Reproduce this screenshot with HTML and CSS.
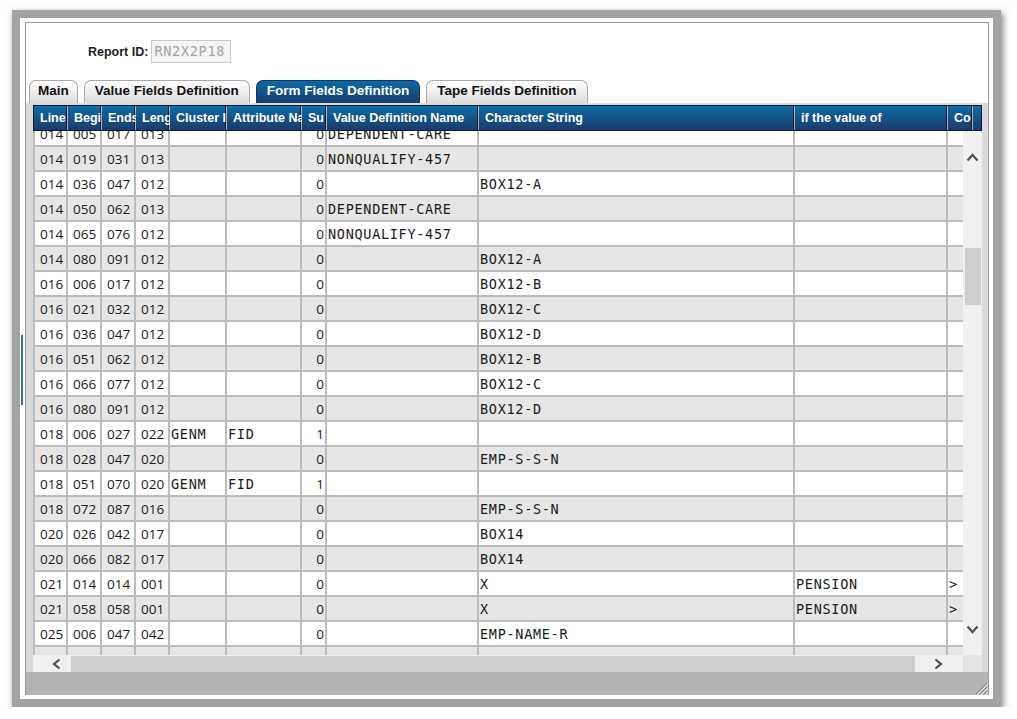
FILE: index.html
```html
<!DOCTYPE html>
<html lang="en">

<head>
    <meta charset="UTF-8">
    <title>Report Definition</title>
    <link rel="stylesheet" href="styles.css">
</head>

<body>
    <div class="frame">
        <span class="splitter"></span>
        <div class="panel">
            <div class="report-row">
                <span class="report-label">Report ID:</span>
                <div class="report-field">RN2X2P18</div>
            </div>

            <div class="tabs">
                <div class="tab">Main</div>
                <div class="tab">Value Fields Definition</div>
                <div class="tab active">Form Fields Definition</div>
                <div class="tab">Tape Fields Definition</div>
            </div>

            <div class="tab-body">
                <div class="grid">
                    <div class="grid-head">
                        <span>Line</span>
                        <span>Begi</span>
                        <span>Ends</span>
                        <span>Leng</span>
                        <span>Cluster I</span>
                        <span>Attribute Na</span>
                        <span>Su</span>
                        <span>Value Definition Name</span>
                        <span>Character String</span>
                        <span>if the value of</span>
                        <span>Co</span>
                        <span class="filler"></span>
                    </div>
                    <div class="grid-main">
                        <div class="rows">
                            <div class="rows-inner" id="rows"></div>
                        </div>
                        <div class="vscroll">
                            <div class="arrow">
                                <svg width="13" height="9" viewBox="0 0 13 9"><polyline points="1.5,7.5 6.5,2 11.5,7.5" fill="none" stroke="#4f4f4f" stroke-width="2.2"/></svg>
                            </div>
                            <div class="vthumb"></div>
                            <div class="spacer"></div>
                            <div class="arrow">
                                <svg width="13" height="9" viewBox="0 0 13 9"><polyline points="1.5,1.5 6.5,7 11.5,1.5" fill="none" stroke="#4f4f4f" stroke-width="2.2"/></svg>
                            </div>
                        </div>
                    </div>
                    <div class="hscroll">
                        <div class="htrack">
                            <div class="hleft">
                                <svg width="9" height="12" viewBox="0 0 9 12"><polyline points="7.5,1.5 2,6 7.5,10.5" fill="none" stroke="#4f4f4f" stroke-width="2.2"/></svg>
                            </div>
                            <div class="hthumb"></div>
                            <div class="hright">
                                <svg width="9" height="12" viewBox="0 0 9 12"><polyline points="1.5,1.5 7,6 1.5,10.5" fill="none" stroke="#4f4f4f" stroke-width="2.2"/></svg>
                            </div>
                        </div>
                    </div>
                </div>
            </div>

            <div class="status-bar">
                <svg class="grip" width="14" height="14" viewBox="0 0 14 14">
                    <g stroke="#808080" stroke-width="1">
                        <line x1="13" y1="2" x2="2" y2="13"/>
                        <line x1="13" y1="6" x2="6" y2="13"/>
                        <line x1="13" y1="10" x2="10" y2="13"/>
                    </g>
                    <g stroke="#ececec" stroke-width="1">
                        <line x1="14" y1="3" x2="3" y2="14"/>
                        <line x1="14" y1="7" x2="7" y2="14"/>
                        <line x1="14" y1="11" x2="11" y2="14"/>
                    </g>
                </svg>
            </div>
        </div>
    </div>

    <script>
        // line, begin, ends, length, cluster, attribute, sub, value def, char string, if value of, compare
        const data = [
            ["014", "005", "017", "013", "", "", "0", "DEPENDENT-CARE", "", "", ""],
            ["014", "019", "031", "013", "", "", "0", "NONQUALIFY-457", "", "", ""],
            ["014", "036", "047", "012", "", "", "0", "", "BOX12-A", "", ""],
            ["014", "050", "062", "013", "", "", "0", "DEPENDENT-CARE", "", "", ""],
            ["014", "065", "076", "012", "", "", "0", "NONQUALIFY-457", "", "", ""],
            ["014", "080", "091", "012", "", "", "0", "", "BOX12-A", "", ""],
            ["016", "006", "017", "012", "", "", "0", "", "BOX12-B", "", ""],
            ["016", "021", "032", "012", "", "", "0", "", "BOX12-C", "", ""],
            ["016", "036", "047", "012", "", "", "0", "", "BOX12-D", "", ""],
            ["016", "051", "062", "012", "", "", "0", "", "BOX12-B", "", ""],
            ["016", "066", "077", "012", "", "", "0", "", "BOX12-C", "", ""],
            ["016", "080", "091", "012", "", "", "0", "", "BOX12-D", "", ""],
            ["018", "006", "027", "022", "GENM", "FID", "1", "", "", "", ""],
            ["018", "028", "047", "020", "", "", "0", "", "EMP-S-S-N", "", ""],
            ["018", "051", "070", "020", "GENM", "FID", "1", "", "", "", ""],
            ["018", "072", "087", "016", "", "", "0", "", "EMP-S-S-N", "", ""],
            ["020", "026", "042", "017", "", "", "0", "", "BOX14", "", ""],
            ["020", "066", "082", "017", "", "", "0", "", "BOX14", "", ""],
            ["021", "014", "014", "001", "", "", "0", "", "X", "PENSION", ">"],
            ["021", "058", "058", "001", "", "", "0", "", "X", "PENSION", ">"],
            ["025", "006", "047", "042", "", "", "0", "", "EMP-NAME-R", "", ""],
            ["", "", "", "", "", "", "", "", "", "", ""]
        ];

        const rowsEl = document.getElementById("rows");

        data.forEach(function (values) {
            const row = document.createElement("div");
            row.className = "row";

            values.forEach(function (value, i) {
                const cell = document.createElement("div");
                if (i === 6) {
                    cell.className = "num-right";
                } else if (i >= 4) {
                    cell.className = "mono";
                }
                cell.textContent = value;
                row.appendChild(cell);
            });

            rowsEl.appendChild(row);
        });
    </script>
</body>

</html>
```

FILE: styles.css
```css
body {
    margin: 0;
    background: #fff;
    font-family: "Liberation Sans", Arial, sans-serif;
}

.frame {
    position: relative;
    width: 989px;
    height: 697px;
    box-sizing: border-box;
    margin: 10px 0 0 12px;
    padding: 4px 4px 4px 5px;
    border: 8px solid #a3a3a3;
    background: #fff;
    box-shadow: 2px 3px 7px rgba(0, 0, 0, 0.5);
}

.splitter {
    position: absolute;
    left: 1px;
    top: 317px;
    width: 2px;
    height: 70px;
    background: #2f6fae;
}

.panel {
    display: flex;
    flex-direction: column;
    height: 100%;
    box-sizing: border-box;
    border: 1px solid #9b9b9b;
    border-bottom: none;
}

/* report id */

.report-row {
    flex: none;
    height: 57px;
    display: flex;
    align-items: center;
    gap: 3px;
    padding-left: 62px;
}

.report-label {
    font-size: 12.5px;
    font-weight: bold;
    color: #222;
}

.report-field {
    width: 80px;
    height: 23px;
    box-sizing: border-box;
    padding-left: 2px;
    border: 1px solid #c9c9c9;
    background: #f5f5f5;
    color: #a3a3a3;
    font-family: "DejaVu Sans Mono", monospace;
    font-size: 13.5px;
    letter-spacing: 0.7px;
    line-height: 21px;
}

/* tabs */

.tabs {
    flex: none;
    height: 23px;
    display: flex;
    align-items: flex-end;
    gap: 6px;
    padding-left: 3px;
}

.tab {
    height: 23px;
    box-sizing: border-box;
    padding: 0 10px;
    border: 1px solid #a9a9a9;
    border-bottom: none;
    border-radius: 7px 7px 0 0;
    background: linear-gradient(#ffffff, #dcdcdc);
    color: #111;
    font-size: 13.5px;
    font-weight: bold;
    line-height: 20px;
    white-space: nowrap;
}

.tab:first-child {
    padding: 0 8px;
}

.tab.active {
    background: linear-gradient(#0a6aa6, #1a3c6c);
    border-color: #163459;
    color: #fff;
}

.tab-body {
    flex: 1;
    min-height: 0;
    padding: 2px 6px 0 7px;
    background: #dadada;
}

/* grid */

.grid {
    width: 949px;
    height: 567px;
    display: flex;
    flex-direction: column;
    background: #e4e4e4;
}

.grid-head {
    flex: none;
    height: 26px;
    box-sizing: border-box;
    display: grid;
    grid-template-columns: 34px 34px 34px 34px 57px 75px 25px 152px 316px 153px 25px 1fr;
    border: 1px solid #0f1a2b;
    background: linear-gradient(#0e6ba5, #1b3b6a);
}

.grid-head span {
    padding-left: 6px;
    overflow: hidden;
    white-space: nowrap;
    color: #fff;
    font-size: 12.5px;
    font-weight: bold;
    line-height: 24px;
    box-shadow: inset -1px 0 0 #a7b0bb, inset -2px 0 0 #0b1a30;
}

.grid-head .filler {
    box-shadow: none;
}

.grid-main {
    flex: 1;
    min-height: 0;
    display: flex;
}

.rows {
    width: 930px;
    overflow: hidden;
}

.rows-inner {
    margin-top: -9px;
    border-left: 2px solid #bcbcbc;
}

.row {
    display: grid;
    grid-template-columns: 33px 34px 34px 34px 57px 75px 25px 152px 316px 153px 25px;
    height: 25px;
    background: #fff;
}

.row:nth-child(even) {
    background: #e6e6e6;
}

.row div {
    padding-left: 5px;
    overflow: hidden;
    white-space: nowrap;
    border-right: 2px solid #bcbcbc;
    border-bottom: 2px solid #bcbcbc;
    color: #1a1a1a;
    font-family: "Open Sans", sans-serif;
    font-size: 13.5px;
    line-height: 25px;
}

.row .num-right {
    padding: 0 1px 0 0;
    text-align: right;
}

.row .mono {
    padding-left: 1px;
    font-family: "DejaVu Sans Mono", monospace;
    font-size: 13.5px;
    letter-spacing: 0.7px;
}

/* scrollbars */

.vscroll {
    width: 19px;
    display: flex;
    flex-direction: column;
    align-items: center;
    background: #f0f0f0;
}

.vscroll .arrow {
    flex: none;
    height: 52px;
    display: flex;
    align-items: center;
    justify-content: center;
}

.vthumb {
    flex: none;
    width: 16px;
    height: 57px;
    margin-top: 65px;
    background: #cdcdcd;
}

.vscroll .spacer {
    flex: 1;
}

.hscroll {
    flex: none;
    height: 17px;
    display: flex;
}

.htrack {
    width: 930px;
    display: flex;
    align-items: center;
    background: #f0f0f0;
}

.hleft {
    width: 38px;
    box-sizing: border-box;
    padding-left: 19px;
    display: flex;
}

.hthumb {
    width: 844px;
    height: 16px;
    align-self: flex-end;
    background: #cdcdcd;
}

.hright {
    padding-left: 19px;
    display: flex;
}

/* status bar */

.status-bar {
    flex: none;
    height: 23px;
    display: flex;
    justify-content: flex-end;
    align-items: flex-end;
    background: #b4b4b4;
}

.grip {
    display: block;
}
```
